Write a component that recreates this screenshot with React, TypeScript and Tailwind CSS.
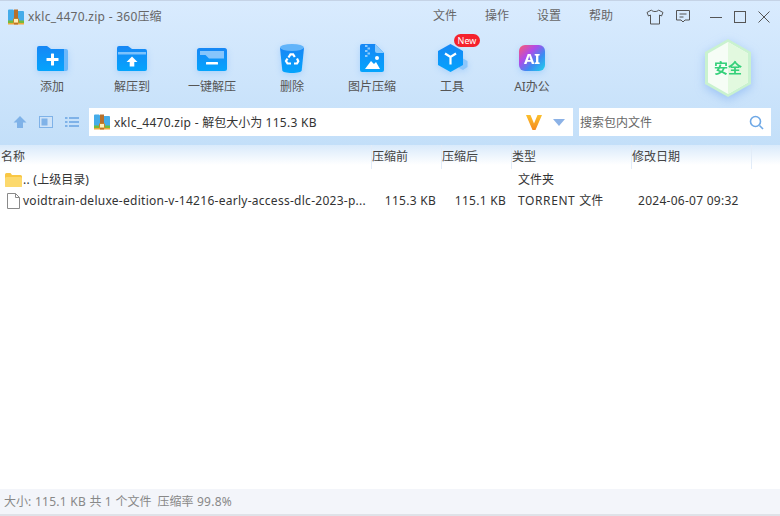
import type { ReactNode } from "react";

const font = { fontFamily: '"Noto Sans", "Noto Sans CJK SC", sans-serif' };

// latin runs sit a bit wider than Noto in the original
function L({ children }: { children: ReactNode }) {
  return <span className="tracking-[0.27px]">{children}</span>;
}

function ZipIcon({ size = 16 }: { size?: number }) {
  return (
    <svg width={size} height={size} viewBox="0 0 16 16" className="shrink-0">
      <path d="M0 1.500a1 1 0 0 1 1-1h4L6.500 2H15a1 1 0 0 1 1 1v9H0z" fill="#45ace9" />
      <rect x="0" y="11.500" width="16" height="2.500" fill="#74bb3c" />
      <rect x="0" y="14" width="16" height="1.500" fill="#f0a93a" />
      <rect x="6" y="0.500" width="4" height="15" fill="#b8702c" />
      <rect x="5.500" y="9.500" width="5" height="4.500" rx="0.500" fill="#fff0b8" stroke="#c47a1e" strokeWidth="0.900" />
    </svg>
  );
}

function AddIcon() {
  return (
    <svg width="31" height="25" viewBox="0 0 31 25">
      <path d="M0 2a2 2 0 0 1 2-2h8l4 3h13v22H2a2 2 0 0 1-2-2z" fill="url(#blueFill)" />
      <path d="M27 3h2a2 2 0 0 1 2 2v18a2 2 0 0 1-2 2h-2z" fill="#6cb8fb" />
      <rect x="9.500" y="12" width="12" height="3" rx="0.500" fill="#fff" />
      <rect x="14" y="7.500" width="3" height="12" rx="0.500" fill="#fff" />
    </svg>
  );
}

function ExtractIcon() {
  return (
    <svg width="30" height="25" viewBox="0 0 30 25">
      <path d="M0 2a2 2 0 0 1 2-2h9l4 3h13a2 2 0 0 1 2 2v18a2 2 0 0 1-2 2H2a2 2 0 0 1-2-2z" fill="url(#blueFill)" />
      <rect x="1" y="6" width="28" height="2.500" fill="#7cc2fc" />
      <path d="M15 10.500l5.500 5.500h-3.200v4.500h-4.600V16H9.500z" fill="#fff" />
    </svg>
  );
}

function OneKeyIcon() {
  return (
    <svg width="30" height="23" viewBox="0 0 30 23" className="mt-[2px]">
      <rect width="30" height="23" rx="2.500" fill="url(#blueFill)" />
      <path d="M3 3h24v7.500H12L8.500 7H3z" fill="#86c5fc" />
      <rect x="9" y="14" width="12" height="2.500" rx="0.500" fill="#fff" />
    </svg>
  );
}

function TrashIcon() {
  return (
    <svg width="24" height="29" viewBox="0 0 24 29">
      <path d="M0 4l2.300 22.500C2.500 28 6.500 29 12 29s9.500-1 9.700-2.500L24 4z" fill="url(#blueFill)" />
      <ellipse cx="12" cy="3.500" rx="12" ry="3.500" fill="#61b4fa" />
      <g fill="none" stroke="#fff" strokeWidth="2.200">
        <path d="M8.500 13.500l2-3.200h2.600l1.700 2.700" />
        <path d="M17 14.500l1.300 2.700-1.300 2.300h-3" />
        <path d="M11 19.500H7.500L6 17l1.500-2.300" />
      </g>
    </svg>
  );
}

function ImageZipIcon() {
  return (
    <svg width="24" height="28" viewBox="0 0 24 28">
      <path d="M2 0h13l9 9v17a2 2 0 0 1-2 2H2a2 2 0 0 1-2-2V2a2 2 0 0 1 2-2z" fill="url(#blueFill)" />
      <path d="M15 0l9 9h-7a2 2 0 0 1-2-2z" fill="#8ccafc" />
      <g fill="#8ccafc">
        <rect x="5" y="1" width="2.500" height="2" />
        <rect x="7.500" y="3.500" width="2.500" height="2" />
        <rect x="5" y="6" width="2.500" height="2" />
        <rect x="7.500" y="8.500" width="2.500" height="2" />
        <rect x="5" y="11" width="2.500" height="2" />
      </g>
      <circle cx="17" cy="14" r="2" fill="#fff" />
      <path d="M5 25l6-8 3 3 2-2 4 7z" fill="#fff" />
    </svg>
  );
}

function ToolsIcon() {
  return (
    <svg width="30" height="28" viewBox="0 0 30 28" className="ml-[1px]">
      <path d="M25 14.500l4.500 2.500v6l-4.500 3-4-2v-8z" fill="#8cc6fb" />
      <path d="M12.500 0L25 7v14l-12.500 7L0 21V7z" fill="url(#blueFill)" />
      <path d="M7 9.500l5.500 3.500 5.500-3.500M12.500 13v7.500" fill="none" stroke="#fff" strokeWidth="2.200" />
    </svg>
  );
}

function AiIcon() {
  return (
    <div className="flex h-[26px] w-[26px] items-center justify-center rounded-[6px] bg-[linear-gradient(135deg,#ff5b6c_0%,#b04be8_35%,#3b8cf2_65%,#1fd4ea_100%)]">
      <span className="text-[15px] font-bold leading-none text-white">AI</span>
    </div>
  );
}

function ToolButton({ label, icon, badge }: { label: string; icon: ReactNode; badge?: boolean }) {
  return (
    <div className="relative flex w-20 flex-col items-center">
      <div className="flex h-[30px] items-center justify-center drop-shadow-[0_2px_3px_rgba(40,140,250,0.22)]">{icon}</div>
      {badge && (
        <span className="absolute left-[42px] top-[-9px] flex h-[13px] w-[26px] items-center justify-center rounded-full bg-[#f5222d] text-[9px] leading-none text-white">
          New
        </span>
      )}
      <span className="mt-[6px] text-xs leading-[16px] text-[#555]">{label}</span>
    </div>
  );
}

function SafeBadge() {
  return (
    <div className="relative h-[58px] w-[46px] drop-shadow-[0_3px_5px_rgba(120,170,240,0.55)]">
      <svg width="46" height="58" viewBox="0 0 46 58" className="absolute inset-0">
        <path d="M23 0l23 13v32L23 58 0 45V13z" fill="#c9f2cf" />
        <path d="M23 3l20 11.500v29L23 55 3 43.500v-29z" fill="#f6fdf6" />
        <path d="M23 3l20 11.500v29L23 55z" fill="#e2f9df" />
      </svg>
      <span className="absolute inset-0 flex items-center justify-center text-[14px] font-bold text-[#35d07a]">
        安全
      </span>
    </div>
  );
}

export default function App() {
  const columns = "grid grid-cols-[372px_70px_70px_120px_120px_1fr]";

  return (
    <div className="flex h-[516px] w-[780px] flex-col overflow-hidden bg-white text-xs" style={font}>
      <svg width="0" height="0" className="absolute">
        <defs>
          <linearGradient id="blueFill" x1="0" y1="0" x2="0" y2="1">
            <stop offset="0" stopColor="#1787f5" />
            <stop offset="1" stopColor="#04a4fd" />
          </linearGradient>
        </defs>
      </svg>

      <div className="h-[145px] shrink-0 border-t border-[#c5d3e6] bg-[linear-gradient(180deg,#d9ebfe_0%,#c3dff9_100%)]">
        {/* title bar */}
        <div className="flex h-[31px] items-center pl-2 pr-[9px]">
          <ZipIcon />
          <span className="ml-1 mt-[1px] text-xs text-[#666]">
            <L>xklc_4470.zip - 360</L>压缩
          </span>
          <div className="ml-auto flex items-center gap-7 pb-[2px] text-xs text-[#666]">
            <span>文件</span>
            <span>操作</span>
            <span>设置</span>
            <span>帮助</span>
          </div>
          <div className="ml-[33px] flex items-center">
            <svg width="18" height="16" viewBox="0 0 18 16" fill="none" stroke="#555" strokeWidth="1">
              <path d="M5.500 1L1 3.500l1.500 3.500L4.500 6v9h9V6l2 1L17 3.500 12.500 1c-.5 2-6.500 2-7 0z" />
            </svg>
            <svg width="16" height="15" viewBox="0 0 16 15" fill="none" stroke="#555" strokeWidth="1" className="ml-[11px]">
              <path d="M1.500 1.500h13v9.500h-4.500L8 13l-2-2H1.500z" />
              <path d="M4.500 5h7M4.500 8h4" />
            </svg>
            <svg width="14" height="14" viewBox="0 0 14 14" fill="none" stroke="#555" strokeWidth="1" className="ml-[18px]">
              <path d="M1 7.500h12" />
            </svg>
            <svg width="14" height="14" viewBox="0 0 14 14" fill="none" stroke="#555" strokeWidth="1" className="ml-[10px]">
              <rect x="1.500" y="1.500" width="11" height="11" />
            </svg>
            <svg width="14" height="14" viewBox="0 0 14 14" fill="none" stroke="#555" strokeWidth="1" className="ml-[10px]">
              <path d="M1.500 1.500l11 11M12.500 1.500l-11 11" />
            </svg>
          </div>
        </div>

        {/* toolbar */}
        <div className="flex h-[76px] items-start pl-3 pr-[29px] pt-[11px]">
          <ToolButton label="添加" icon={<AddIcon />} />
          <ToolButton label="解压到" icon={<ExtractIcon />} />
          <ToolButton label="一键解压" icon={<OneKeyIcon />} />
          <ToolButton label="删除" icon={<TrashIcon />} />
          <ToolButton label="图片压缩" icon={<ImageZipIcon />} />
          <ToolButton label="工具" icon={<ToolsIcon />} badge />
          <ToolButton label="AI办公" icon={<AiIcon />} />
          <div className="ml-auto mt-[-4px]">
            <SafeBadge />
          </div>
        </div>

        {/* address row */}
        <div className="flex h-[28px] items-center pl-3 pr-2">
          <div className="flex w-[77px] items-center">
            <svg width="14" height="14" viewBox="0 0 14 14" fill="#7fb2e8" className="ml-[1px]">
              <path d="M7 1l6.500 6.500H10V13H4V7.500H.5z" />
            </svg>
            <svg width="14" height="14" viewBox="0 0 14 14" className="ml-[12px]">
              <rect x="0.500" y="1.500" width="13" height="11" fill="#cfe3f8" stroke="#7fb2e8" />
              <rect x="2.500" y="3.500" width="6" height="7" fill="#7fb2e8" />
            </svg>
            <svg width="14" height="14" viewBox="0 0 14 14" fill="#7fb2e8" className="ml-[12px]">
              <rect x="0" y="2" width="2.500" height="2" />
              <rect x="4" y="2" width="10" height="2" />
              <rect x="0" y="6" width="2.500" height="2" />
              <rect x="4" y="6" width="10" height="2" />
              <rect x="0" y="10" width="2.500" height="2" />
              <rect x="4" y="10" width="10" height="2" />
            </svg>
          </div>
          <div className="flex h-[28px] w-[484px] items-center bg-white pl-[5px] pr-2">
            <ZipIcon />
            <span className="ml-1 pt-px text-xs text-[#333]">
              <L>xklc_4470.zip - </L>解包大小为<L> 115.3 KB</L>
            </span>
            <svg width="16" height="15" viewBox="0 0 16 15" className="ml-auto">
              <defs>
                <linearGradient id="vFill" x1="0" y1="0" x2="0" y2="1">
                  <stop offset="0" stopColor="#fbc02d" />
                  <stop offset="1" stopColor="#f58a1f" />
                </linearGradient>
              </defs>
              <path d="M0 0h4.500L8 8.500 11.500 0H16L9.500 15h-3z" fill="url(#vFill)" />
            </svg>
            <svg width="12" height="7" viewBox="0 0 12 7" className="ml-[11px]">
              <path d="M0 0h12L6 7z" fill="#8cb2e6" />
            </svg>
          </div>
          <div className="ml-[6px] flex h-[28px] w-[192px] items-center bg-white pl-[1px] pr-[7px]">
            <span className="pt-px text-xs text-[#666]">搜索包内文件</span>
            <svg width="15" height="15" viewBox="0 0 15 15" fill="none" stroke="#6ea8e6" strokeWidth="1.600" className="ml-auto">
              <circle cx="6.500" cy="6.500" r="5" />
              <path d="M10.500 10.500L14 14" />
            </svg>
          </div>
        </div>
      </div>

      {/* file list */}
      <div className="flex min-h-0 flex-1 flex-col bg-white">
        <div className={`${columns} h-5 shrink-0 bg-[linear-gradient(180deg,#d9eafb_0%,#ffffff_100%)] text-[#444]`}>
          <span className="border-r border-[#e2ecf8] pl-px leading-[24px]">名称</span>
          <span className="border-r border-[#e2ecf8] leading-[24px]">压缩前</span>
          <span className="border-r border-[#e2ecf8] leading-[24px]">压缩后</span>
          <span className="border-r border-[#e2ecf8] leading-[24px]">类型</span>
          <span className="border-r border-[#e2ecf8] leading-[24px]">修改日期</span>
          <span />
        </div>

        <div className={`${columns} mt-[4px] h-[21px] items-center text-[#333]`}>
          <div className="flex items-center pl-[5px]">
            <svg width="17" height="14" viewBox="0 0 17 14">
              <path d="M0 1.500A1.500 1.500 0 0 1 1.500 0h4L7 2h8.500A1.500 1.500 0 0 1 17 3.500V12.500a1.500 1.500 0 0 1-1.500 1.500h-14A1.500 1.500 0 0 1 0 12.500z" fill="#f9c744" />
              <rect x="0" y="4" width="17" height="10" rx="1.500" fill="#fcd96d" />
            </svg>
            <span className="ml-[1px]">
              <L>.. (</L>上级目录<L>)</L>
            </span>
          </div>
          <span />
          <span />
          <span className="pl-[6px]">文件夹</span>
          <span />
          <span />
        </div>

        <div className={`${columns} h-[21px] items-center text-[#333]`}>
          <div className="flex min-w-0 items-center pl-[7px]">
            <svg width="13" height="16" viewBox="0 0 13 16" fill="#fff" stroke="#8a8a8a" className="shrink-0">
              <path d="M.5.5h8l4 4v11H.5zM8.500.5v4h4" />
            </svg>
            <span className="ml-[3px] whitespace-nowrap tracking-[0.27px]">voidtrain-deluxe-edition-v-14216-early-access-dlc-2023-p...</span>
          </div>
          <span className="pr-[6px] text-right tracking-[0.27px]">115.3 KB</span>
          <span className="pr-[6px] text-right tracking-[0.27px]">115.1 KB</span>
          <span className="pl-[6px]">
            <span className="tracking-[0.6px]">TORRENT </span>文件
          </span>
          <span className="pl-[6px] tracking-[0.27px]">2024-06-07 09:32</span>
          <span />
        </div>
      </div>

      {/* status bar */}
      <div className="flex h-[25px] shrink-0 items-center bg-[#f3f5fa] pl-1 text-xs text-[#888]">
        <span>
          大小<L>: 115.1 KB </L>共<L> 1 </L>个文件<span className="ml-[1.500px] mr-[1.500px]"> </span>压缩率<L> 99.8%</L>
        </span>
      </div>
      <div className="h-[2px] shrink-0 bg-[#dfe2e8]" />
    </div>
  );
}
